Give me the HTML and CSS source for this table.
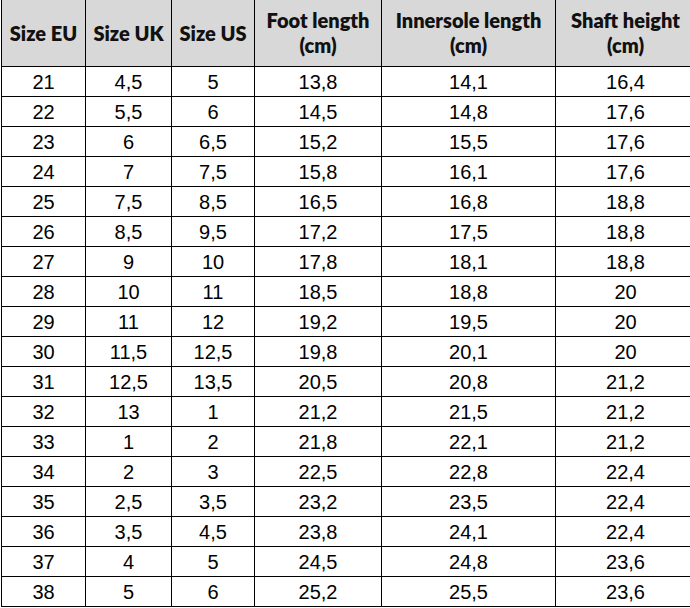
FILE: index.html
```html
<!DOCTYPE html>
<html lang="en">
<head>
<meta charset="utf-8">
<title>Size chart</title>
<link rel="stylesheet" href="styles.css">
</head>
<body>
<table class="sizes">
  <colgroup>
    <col class="c-eu"><col class="c-uk"><col class="c-us"><col class="c-foot"><col class="c-inner"><col class="c-shaft">
  </colgroup>
  <thead>
    <tr>
      <th>Size EU</th>
      <th>Size UK</th>
      <th>Size US</th>
      <th>Foot length<br>(cm)</th>
      <th>Innersole length<br>(cm)</th>
      <th>Shaft height<br>(cm)</th>
    </tr>
  </thead>
  <tbody>
    <tr><td>21</td><td>4,5</td><td>5</td><td>13,8</td><td>14,1</td><td>16,4</td></tr>
    <tr><td>22</td><td>5,5</td><td>6</td><td>14,5</td><td>14,8</td><td>17,6</td></tr>
    <tr><td>23</td><td>6</td><td>6,5</td><td>15,2</td><td>15,5</td><td>17,6</td></tr>
    <tr><td>24</td><td>7</td><td>7,5</td><td>15,8</td><td>16,1</td><td>17,6</td></tr>
    <tr><td>25</td><td>7,5</td><td>8,5</td><td>16,5</td><td>16,8</td><td>18,8</td></tr>
    <tr><td>26</td><td>8,5</td><td>9,5</td><td>17,2</td><td>17,5</td><td>18,8</td></tr>
    <tr><td>27</td><td>9</td><td>10</td><td>17,8</td><td>18,1</td><td>18,8</td></tr>
    <tr><td>28</td><td>10</td><td>11</td><td>18,5</td><td>18,8</td><td>20</td></tr>
    <tr><td>29</td><td>11</td><td>12</td><td>19,2</td><td>19,5</td><td>20</td></tr>
    <tr><td>30</td><td>11,5</td><td>12,5</td><td>19,8</td><td>20,1</td><td>20</td></tr>
    <tr><td>31</td><td>12,5</td><td>13,5</td><td>20,5</td><td>20,8</td><td>21,2</td></tr>
    <tr><td>32</td><td>13</td><td>1</td><td>21,2</td><td>21,5</td><td>21,2</td></tr>
    <tr><td>33</td><td>1</td><td>2</td><td>21,8</td><td>22,1</td><td>21,2</td></tr>
    <tr><td>34</td><td>2</td><td>3</td><td>22,5</td><td>22,8</td><td>22,4</td></tr>
    <tr><td>35</td><td>2,5</td><td>3,5</td><td>23,2</td><td>23,5</td><td>22,4</td></tr>
    <tr><td>36</td><td>3,5</td><td>4,5</td><td>23,8</td><td>24,1</td><td>22,4</td></tr>
    <tr><td>37</td><td>4</td><td>5</td><td>24,5</td><td>24,8</td><td>23,6</td></tr>
    <tr><td>38</td><td>5</td><td>6</td><td>25,2</td><td>25,5</td><td>23,6</td></tr>
  </tbody>
</table>
</body>
</html>
```
FILE: styles.css
```css
html, body {
  margin: 0;
  padding: 0;
  background: #ffffff;
}

body {
  padding-left: 1px;
  overflow: hidden;
}

.sizes {
  border-collapse: collapse;
  table-layout: fixed;
  width: 694px;
  font-family: "Liberation Sans", Arial, sans-serif;
  color: #000;
}

.c-eu { width: 84px; }
.c-uk { width: 86px; }
.c-us { width: 83px; }
.c-foot { width: 127px; }
.c-inner { width: 174px; }
.c-shaft { width: 140px; }

.sizes th,
.sizes td {
  border: 1px solid #000;
  padding: 0;
  text-align: center;
}

.sizes th {
  border-top: 0;
  height: 66px;
  background: #d8d8d8;
  font-family: Lato, "Open Sans", sans-serif;
  font-weight: 800;
  font-size: 20px;
  line-height: 25px;
  color: #111;
  vertical-align: middle;
}

.sizes td {
  height: 29px;
  font-size: 20px;
  line-height: 22px;
}
```
